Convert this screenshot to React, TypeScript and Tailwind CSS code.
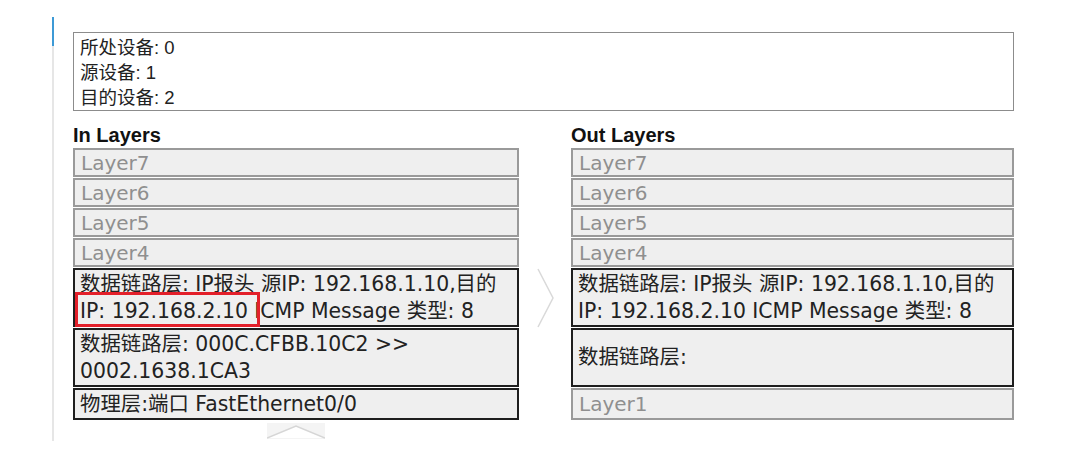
import React from "react";

const cjk = '"DejaVu Sans", "Noto Sans CJK SC", sans-serif';

function GrayRow({ label, tall }: { label: string; tall?: boolean }) {
  return (
    <div
      className={`${tall ? "h-[32px]" : "h-[29px]"} border-2 border-[#9a9a9a] bg-[#efefef] px-[6px] pt-px flex items-center text-[20px] leading-[25px] text-[#8f8f8f]`}
    >
      {label}
    </div>
  );
}

function DarkRow({
  lines,
  h,
  children,
}: {
  lines: string[];
  h: string;
  children?: React.ReactNode;
}) {
  return (
    <div
      className={`relative ${h} border-2 border-[#1e1e1e] bg-[#efefef] px-[5px] flex flex-col justify-center text-[20.4px] leading-[27px] text-[#222]`}
    >
      {lines.map((l, i) => (
        <div key={i} className="whitespace-nowrap">
          {l}
        </div>
      ))}
      {children}
    </div>
  );
}

export default function App() {
  return (
    <div
      className="w-[1080px] h-[474px] bg-white flex pl-[52px] pt-[17px]"
      style={{ fontFamily: cjk }}
    >
      {/* left rule */}
      <div className="flex flex-col w-[2px]">
        <div className="h-[29px] bg-[#3d9ad6]" />
        <div className="h-[395px] bg-[#e6e6e6]" />
      </div>

      <div className="ml-[19px] mt-[15px] w-[941px] flex flex-col">
        {/* info box */}
        <div
          className="h-[79px] border border-[#8c8c8c] pl-[6px] pt-[2px] text-[18.5px] leading-[25px] text-[#222]"
          style={{ fontFamily: '"Liberation Sans", "Noto Sans CJK SC", sans-serif' }}
        >
          <div>所处设备: 0</div>
          <div>源设备: 1</div>
          <div>目的设备: 2</div>
        </div>

        <div className="flex mt-[13px]">
          {/* In layers */}
          <div className="w-[446px] flex flex-col">
            <div
              className="text-[20px] font-bold leading-[22px] text-[#111] mb-[2px]"
              style={{ fontFamily: '"Liberation Sans", sans-serif' }}
            >
              In Layers
            </div>
            <div className="flex flex-col gap-px">
              <GrayRow label="Layer7" />
              <GrayRow label="Layer6" />
              <GrayRow label="Layer5" />
              <GrayRow label="Layer4" />
              <DarkRow
                h="h-[59px]"
                lines={[
                  "数据链路层: IP报头 源IP: 192.168.1.10,目的",
                  "IP: 192.168.2.10 ICMP Message 类型: 8",
                ]}
              >
                <div className="absolute left-[0px] top-[22px] w-[185px] h-[35px] border-[3px] border-[#e3202a]" />
              </DarkRow>
              <DarkRow
                h="h-[59px]"
                lines={["数据链路层: 000C.CFBB.10C2 >>", "0002.1638.1CA3"]}
              />
              <DarkRow h="h-[32px]" lines={["物理层:端口 FastEthernet0/0"]} />
            </div>
            <div className="flex justify-center mt-[3px]">
              <svg width="58" height="16" viewBox="0 0 58 16">
                <rect x="0" y="0" width="58" height="16" fill="#f4f4f4" />
                <polyline
                  points="0,15 29,3 58,15"
                  fill="#ffffff"
                  stroke="#d6d6d6"
                  strokeWidth="1.5"
                />
              </svg>
            </div>
          </div>

          {/* middle arrow */}
          <div className="w-[52px] flex flex-col">
            <div className="h-[144px]" />
            <div className="pl-[18px]">
              <svg width="18" height="60" viewBox="0 0 18 60">
                <polyline
                  points="1,1 16,30 1,59"
                  fill="none"
                  stroke="#d9d9d9"
                  strokeWidth="1.5"
                />
              </svg>
            </div>
          </div>

          {/* Out layers */}
          <div className="w-[443px] flex flex-col">
            <div
              className="text-[20px] font-bold leading-[22px] text-[#111] mb-[2px]"
              style={{ fontFamily: '"Liberation Sans", sans-serif' }}
            >
              Out Layers
            </div>
            <div className="flex flex-col gap-px">
              <GrayRow label="Layer7" />
              <GrayRow label="Layer6" />
              <GrayRow label="Layer5" />
              <GrayRow label="Layer4" />
              <DarkRow
                h="h-[59px]"
                lines={[
                  "数据链路层: IP报头 源IP: 192.168.1.10,目的",
                  "IP: 192.168.2.10 ICMP Message 类型: 8",
                ]}
              />
              <DarkRow h="h-[59px]" lines={["数据链路层:"]} />
              <GrayRow label="Layer1" tall />
            </div>
          </div>
        </div>
      </div>
    </div>
  );
}
